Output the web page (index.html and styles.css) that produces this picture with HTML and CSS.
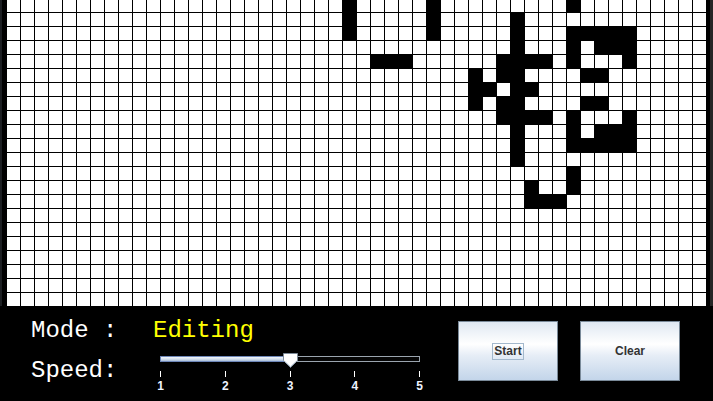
FILE: index.html
```html
<!DOCTYPE html>
<html>
<head>
<meta charset="utf-8">
<link rel="stylesheet" href="styles.css">
</head>
<body>
<div class="app">
  <div class="board-row">
    <div class="edge-left"></div>
    <div class="board">
      <div class="cell" style="grid-area:1/25/4/26"></div>
      <div class="cell" style="grid-area:1/31/4/32"></div>
      <div class="cell" style="grid-area:1/41"></div>
      <div class="cell" style="grid-area:2/37/5/38"></div>
      <div class="cell" style="grid-area:3/41/4/46"></div>
      <div class="cell" style="grid-area:4/41"></div>
      <div class="cell" style="grid-area:4/43/5/46"></div>
      <div class="cell" style="grid-area:5/27/6/30"></div>
      <div class="cell" style="grid-area:5/36/6/40"></div>
      <div class="cell" style="grid-area:5/41"></div>
      <div class="cell" style="grid-area:5/45"></div>
      <div class="cell" style="grid-area:6/34"></div>
      <div class="cell" style="grid-area:6/36/7/38"></div>
      <div class="cell" style="grid-area:6/42/7/44"></div>
      <div class="cell" style="grid-area:7/34/8/36"></div>
      <div class="cell" style="grid-area:7/37/8/39"></div>
      <div class="cell" style="grid-area:8/34"></div>
      <div class="cell" style="grid-area:8/36/9/38"></div>
      <div class="cell" style="grid-area:8/42/9/44"></div>
      <div class="cell" style="grid-area:9/36/10/40"></div>
      <div class="cell" style="grid-area:9/41"></div>
      <div class="cell" style="grid-area:9/45"></div>
      <div class="cell" style="grid-area:10/37/13/38"></div>
      <div class="cell" style="grid-area:10/41"></div>
      <div class="cell" style="grid-area:10/43/11/46"></div>
      <div class="cell" style="grid-area:11/41/12/46"></div>
      <div class="cell" style="grid-area:13/41/15/42"></div>
      <div class="cell" style="grid-area:14/38"></div>
      <div class="cell" style="grid-area:15/38/16/41"></div>
    </div>
    <div class="edge-right"></div>
  </div>
  <div class="controls">
    <div class="info">
      <div class="label">Mode :</div>
      <div class="mode">Editing</div>
      <div class="label">Speed:</div>
      <div class="slider">
        <div class="track"><div class="fill"></div></div>
        <svg class="thumb" width="15" height="15" viewBox="0 0 15 15">
          <path d="M0.5 0.5 H14.5 V7.5 L7.5 14.5 L0.5 7.5 Z" fill="#ffffff" stroke="#7d8a98" stroke-width="1"/>
          <path d="M1.5 8 L7.5 13.5 L13.5 8" fill="none" stroke="#c9d4e0" stroke-width="1"/>
        </svg>
        <div class="ticks"><i></i><i></i><i></i><i></i><i></i></div>
        <div class="nums"><span>1</span><span>2</span><span>3</span><span>4</span><span>5</span></div>
      </div>
    </div>
    <div class="actions">
      <button class="btn"><span class="focus">Start</span></button>
      <button class="btn">Clear</button>
    </div>
  </div>
</div>
</body>
</html>
```

FILE: styles.css
```css
html, body {
  margin: 0;
  padding: 0;
  background: #000;
  overflow: hidden;
}
.app {
  width: 713px;
  height: 401px;
  display: flex;
  flex-direction: column;
  background: #000;
}
.board-row {
  display: flex;
  height: 306px;
  overflow: hidden;
}
.edge-left {
  width: 7px;
  flex: none;
  box-sizing: border-box;
  border-left: 2px solid #1c1f22;
  background: #000;
}
.board {
  flex: none;
  margin-top: -1px;
  width: 699px;
  height: 307px;
  display: grid;
  grid-template-columns: repeat(50, 13px);
  grid-template-rows: repeat(22, 13px);
  gap: 1px;
  background-color: #fff;
  background-image:
    linear-gradient(to right, transparent 13px, #000 13px),
    linear-gradient(to bottom, transparent 13px, #000 13px);
  background-size: 14px 100%, 100% 14px;
}
.cell {
  background: #000;
}
.edge-right {
  width: 7px;
  flex: none;
  box-sizing: border-box;
  border-left: 4px solid #000;
  background: #262626;
}
.controls {
  display: flex;
  height: 95px;
}
.info {
  display: grid;
  grid-template-columns: 122px 270px;
  grid-auto-rows: 40px;
  padding: 5px 0 0 31px;
  font-family: "Liberation Mono", "Courier New", monospace;
  font-size: 24px;
  line-height: 40px;
}
.label {
  color: #fff;
}
.mode {
  color: #ffff00;
  margin-left: 0;
}
.slider {
  position: relative;
  width: 260px;
  margin: 2px 0 0 7px;
  line-height: normal;
}
.track {
  margin-top: 3px;
  height: 6px;
  box-sizing: border-box;
  border: 1px solid #9aa4ae;
  background: #050505;
  display: flex;
}
.fill {
  width: 130px;
  margin: -1px 0 -1px -1px;
  box-sizing: border-box;
  border: 1px solid #6e87b8;
  background: linear-gradient(to bottom, #f2f6fb 0%, #d6e1ef 50%, #a9bcd8 100%);
}
.thumb {
  position: absolute;
  left: 123px;
  top: 0;
}
.ticks {
  margin-top: 9px;
  height: 6px;
  display: flex;
  justify-content: space-between;
}
.ticks i {
  width: 1px;
  height: 6px;
  background: #fff;
}
.nums {
  margin: 3px -4px 0;
  display: flex;
  justify-content: space-between;
  font-family: "Liberation Sans", Arial, sans-serif;
  font-weight: bold;
  font-size: 12px;
  line-height: 12px;
  color: #eef3ff;
}
.nums span {
  width: 9px;
  text-align: center;
}
.actions {
  display: flex;
  gap: 22px;
  margin-left: 35px;
  padding-top: 15px;
  align-items: flex-start;
}
.btn {
  width: 100px;
  height: 60px;
  margin: 0;
  padding: 0;
  box-sizing: border-box;
  border: 1px solid #7a8a99;
  background: linear-gradient(to bottom, #dfe8f2 0%, #ffffff 38%, #e6edf6 58%, #c3d5ea 100%);
  font-family: "Liberation Sans", Arial, sans-serif;
  font-weight: bold;
  font-size: 12px;
  color: #333333;
  display: flex;
  align-items: center;
  justify-content: center;
}
.focus {
  border: 1px solid #a3b8cc;
  padding: 0 1px;
  line-height: 15px;
}
```
